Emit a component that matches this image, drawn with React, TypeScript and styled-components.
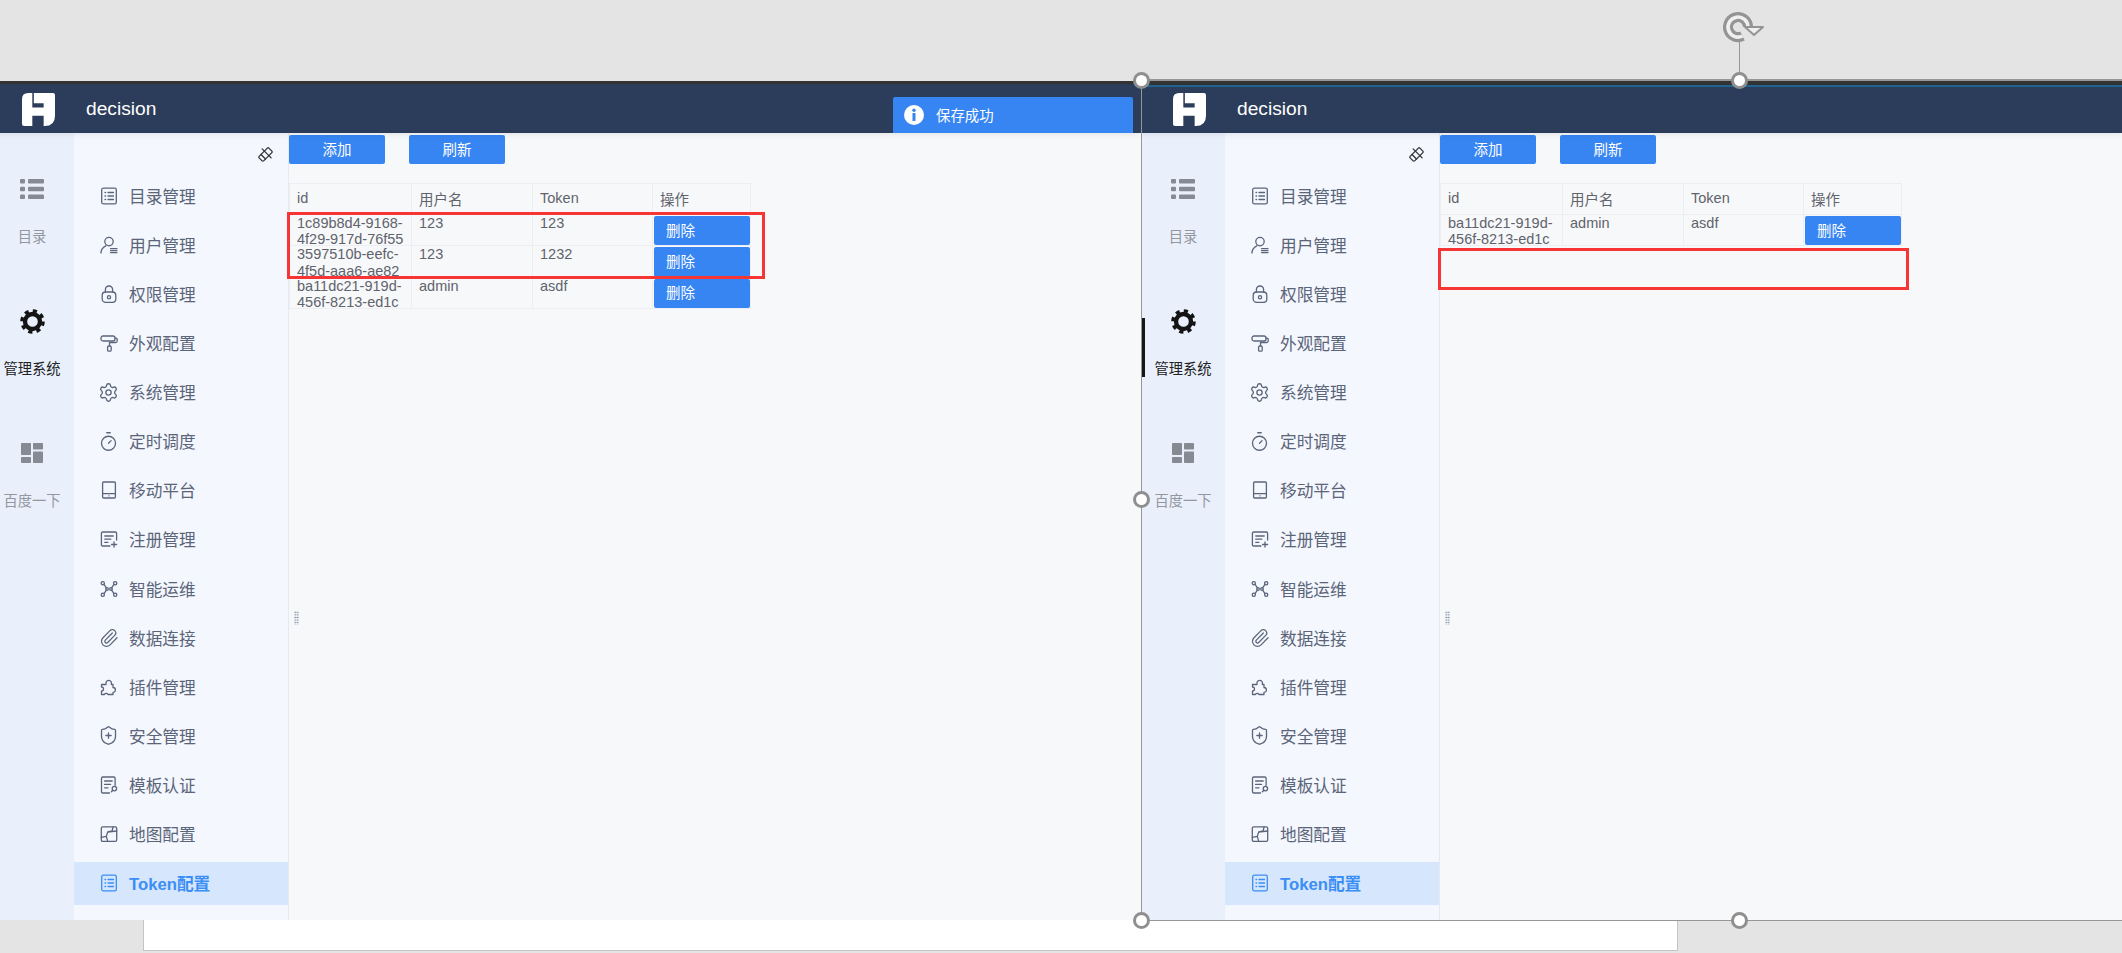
import React from "react";
import styled, { createGlobalStyle } from "styled-components";
import { Settings, Timer, Paperclip, ShieldPlus } from "lucide-react";

const FONT = `"Liberation Sans", "Noto Sans CJK SC", sans-serif`;

const Global = createGlobalStyle`
  html, body { margin: 0; padding: 0; background: #e4e4e4; }
  body { font-family: ${FONT}; }
`;

const Page = styled.div`
  position: relative;
  width: 2122px;
  height: 953px;
  overflow: hidden;
  background: #e4e4e4;
`;
const TopGap = styled.div`
  height: 81px;
`;
const Stage = styled.div`
  display: flex;
  height: 839px;
`;
const Screen = styled.section<{ $width: number; $crop: number }>`
  position: relative;
  flex: 0 0 ${(p) => p.$width}px;
  width: ${(p) => p.$width}px;
  overflow: hidden;
  display: flex;
  flex-direction: column;
  background: #f7f8fa;
  & > * {
    margin-left: ${(p) => -p.$crop}px;
  }
`;
const Header = styled.header<{ $accent: boolean }>`
  position: relative;
  z-index: 2;
  flex: 0 0 52px;
  box-sizing: border-box;
  display: flex;
  align-items: center;
  padding-left: 32px;
  padding-top: ${(p) => (p.$accent ? 0 : 1)}px;
  background: #2c3d5b;
  border-top: ${(p) => (p.$accent ? "4px solid #333" : "3px solid #333")};
  box-shadow: ${(p) =>
    p.$accent ? "inset 0 2px 0 #1f6391, 0 2px 6px rgba(0,0,0,.07)" : "0 2px 6px rgba(0,0,0,.07)"};
`;
const AppName = styled.span`
  margin-left: 31px;
  font-size: 19.2px;
  color: #fff;
`;
const Body = styled.div`
  flex: 1;
  display: flex;
  min-height: 0;
`;
const Rail = styled.nav`
  flex: 0 0 84px;
  box-sizing: border-box;
  padding-top: 44px;
  background: #e9f0fc;
`;
const RailItem = styled.div<{ $active?: boolean }>`
  position: relative;
  height: 132px;
  display: flex;
  flex-direction: column;
  align-items: center;
  color: ${(p) => (p.$active ? "#222" : "#94979c")};
  font-size: 14.3px;
`;
const RailIcon = styled.div`
  height: 24px;
  display: flex;
  align-items: center;
  justify-content: center;
`;
const RailLabel = styled.div`
  margin-top: 25px;
  line-height: 22px;
`;
const RailBar = styled.i`
  position: absolute;
  left: 0;
  top: 9px;
  width: 4px;
  height: 59px;
  background: #161616;
`;
const Menu = styled.nav`
  position: relative;
  flex: 0 0 215px;
  box-sizing: border-box;
  padding-top: 41px;
  display: flex;
  flex-direction: column;
  gap: 6.14px;
  background: #f4f7fe;
  border-right: 1px solid #e6e9f1;
`;
const PinButton = styled.div`
  position: absolute;
  top: 13px;
  right: 14px;
  width: 17px;
  height: 17px;
`;
const MenuItem = styled.div<{ $active?: boolean }>`
  flex: 0 0 43px;
  display: flex;
  align-items: center;
  padding-left: 25px;
  color: ${(p) => (p.$active ? "#3a8ef6" : "#5b6579")};
  background: ${(p) => (p.$active ? "#d6e6fc" : "transparent")};
  font-size: 16.7px;
  font-weight: ${(p) => (p.$active ? 700 : 400)};
`;
const MenuIcon = styled.span`
  flex: 0 0 19px;
  width: 19px;
  height: 19px;
  margin-right: 11px;
  display: flex;
  align-items: center;
  justify-content: center;
  & svg {
    display: block;
    flex: none;
  }
`;
const Content = styled.main`
  position: relative;
  flex: 1;
  min-width: 0;
  padding-top: 2px;
  background: #f7f8fa;
`;
const Toolbar = styled.div`
  display: flex;
  gap: 24px;
  margin-bottom: 19px;
`;
const ToolButton = styled.button`
  width: 96px;
  height: 29px;
  padding: 0 0 2px;
  border: 0;
  border-radius: 2px;
  background: #3685f2;
  color: #fff;
  font: 14.5px ${FONT};
`;
const Table = styled.table`
  table-layout: fixed;
  width: 461px;
  border-collapse: collapse;
  color: #5f636c;
  font-size: 14.5px;
`;
const Th = styled.th<{ $w: number }>`
  width: ${(p) => p.$w}px;
  height: 31px;
  box-sizing: border-box;
  padding: 0 7px 2px;
  border: 1px solid #eceef2;
  font-weight: 400;
  text-align: left;
`;
const Td = styled.td`
  height: 31.3px;
  box-sizing: border-box;
  padding: 0;
  border: 1px solid #eceef2;
  vertical-align: top;
`;
const CellText = styled.div`
  height: 30.3px;
  padding: 0 1px 0 7px;
  line-height: 16.4px;
  overflow-wrap: anywhere;
`;
const DeleteButton = styled.button`
  display: block;
  width: 96px;
  height: 29.3px;
  margin: 1px 0 0 1px;
  padding: 0 0 3px 12px;
  border: 0;
  border-radius: 2px;
  background: #3685f2;
  color: #fff;
  text-align: left;
  font: 14.5px ${FONT};
`;
const Grip = styled.div`
  position: absolute;
  left: 5px;
  top: 478px;
  width: 5px;
  height: 14px;
  background-image: radial-gradient(circle, #8b96aa 0.8px, transparent 0.9px);
  background-size: 2.5px 2.6px;
`;
const Sheet = styled.div`
  box-sizing: border-box;
  width: 1535px;
  height: 31px;
  margin-left: 143px;
  background: #fff;
  border: 1px solid #c4c4c4;
  border-top: 0;
`;
const Toast = styled.div`
  position: absolute;
  z-index: 3;
  left: 893px;
  top: 97px;
  width: 240px;
  height: 36px;
  box-sizing: border-box;
  display: flex;
  align-items: center;
  gap: 12px;
  padding-left: 11px;
  background: #3685f2;
  border-radius: 2px 2px 0 0;
  color: #fff;
  font-size: 14.4px;
`;
const ToastText = styled.span`
  position: relative;
  top: -1px;
`;
const RedFrame = styled.div<{ $x: number; $y: number; $w: number; $h: number }>`
  position: absolute;
  z-index: 4;
  left: ${(p) => p.$x}px;
  top: ${(p) => p.$y}px;
  width: ${(p) => p.$w}px;
  height: ${(p) => p.$h}px;
  box-sizing: border-box;
  border: 3px solid #f73535;
`;
const GuideLine = styled.div<{ $x: number; $y: number; $w: number; $h: number }>`
  position: absolute;
  z-index: 5;
  left: ${(p) => p.$x}px;
  top: ${(p) => p.$y}px;
  width: ${(p) => p.$w}px;
  height: ${(p) => p.$h}px;
  background: #979797;
`;
const Handle = styled.div<{ $x: number; $y: number }>`
  position: absolute;
  z-index: 6;
  left: ${(p) => p.$x - 8.5}px;
  top: ${(p) => p.$y - 8.5}px;
  width: 17px;
  height: 17px;
  box-sizing: border-box;
  border: 3px solid #8f8f8f;
  border-radius: 50%;
  background: #fff;
`;
const RotateGlyph = styled.svg`
  position: absolute;
  z-index: 6;
  left: 1723px;
  top: 11px;
  width: 41px;
  height: 32px;
`;

const Icon: React.FC<{ children: React.ReactNode }> = ({ children }) => (
  <svg width="18" height="18" viewBox="0 0 18 18" fill="none" stroke="currentColor" strokeWidth="1.3" strokeLinecap="round" strokeLinejoin="round">
    {children}
  </svg>
);

const CatalogIcon = () => (
  <Icon>
    <rect x="1.7" y="1.2" width="14.6" height="15.6" rx="1.6" />
    <path d="M5 5.5h.6M5 9h.6M5 12.5h.6M8 5.5h5.5M8 9h5.5M8 12.5h5.5" />
  </Icon>
);
const UserIcon = () => (
  <Icon>
    <circle cx="9" cy="5.6" r="4.2" />
    <path d="M1 17c0-3.6 2-5.8 4.8-7.2M10.5 12.6h6.5M10.5 14.6h6.5M10.5 16.6h6.5" />
  </Icon>
);
const LockIcon = () => (
  <Icon>
    <rect x="2.2" y="7" width="13.6" height="10.4" rx="3.4" />
    <path d="M5.4 7V4.6a3.6 3.6 0 0 1 7.2 0V7" />
    <circle cx="9" cy="12.2" r="1.6" />
  </Icon>
);
const RollerIcon = () => (
  <Icon>
    <rect x="1" y="2" width="14" height="5" rx="2" />
    <path d="M15 4.2h1a1.2 1.2 0 0 1 1.2 1.2v1.6a1.5 1.5 0 0 1-1.5 1.5H9.5v3" />
    <rect x="7.6" y="12" width="3.6" height="5.2" rx="1.2" />
  </Icon>
);
const TabletIcon = () => (
  <Icon>
    <rect x="2.6" y="1" width="12.8" height="16" rx="1" />
    <path d="M2.6 12.6h12.8M8.9 14.8h.2" />
  </Icon>
);
const RegisterIcon = () => (
  <Icon>
    <path d="M10 16H2.6A1.2 1.2 0 0 1 1.4 14.8V3.2A1.2 1.2 0 0 1 2.6 2h12.8a1.2 1.2 0 0 1 1.2 1.2V10" />
    <path d="M4.8 6h8.4M4.8 9.2h6M4.8 12.4h3M14 12v5M11.6 14.5h5" />
  </Icon>
);
const OpsIcon = () => (
  <Icon>
    <circle cx="2.8" cy="3.2" r="1.6" />
    <circle cx="15.2" cy="3.2" r="1.6" />
    <circle cx="2.8" cy="14.8" r="1.6" />
    <circle cx="15.2" cy="14.8" r="1.6" />
    <circle cx="7" cy="9" r="1.3" />
    <circle cx="11" cy="9" r="1.3" />
    <path d="M4 4.4l2.4 3.4M14 4.4l-2.4 3.4M4 13.6l2.4-3.4M14 13.6l-2.4-3.4" />
  </Icon>
);
const PuzzleIcon = () => (
  <Icon>
    <path d="M1.5 9V6.5H6V5a2.7 2.7 0 1 1 5.4 0v1.5H13v3a2.4 2.4 0 1 1 0 4.8v2.2H8a2 2 0 0 0-3.6 0H1.5V13a2 2 0 1 0 0-4Z" />
  </Icon>
);
const CertIcon = () => (
  <Icon>
    <path d="M9.5 17H2.8a1.3 1.3 0 0 1-1.3-1.3V2.3A1.3 1.3 0 0 1 2.8 1h11a1.3 1.3 0 0 1 1.3 1.3v7" />
    <path d="M4.6 5h7.6M4.6 8.4h6M4.6 11.8h3.4" />
    <circle cx="14.4" cy="12.6" r="2.2" />
    <path d="M12.8 14.2l-1.4 1.6" />
  </Icon>
);
const MapIcon = () => (
  <Icon>
    <rect x="1.3" y="1.8" width="15.4" height="14.6" rx="1.4" />
    <path d="M1.3 12.4l5-1 1.4 5M6.3 11.4l1.4-4.4 4.4-1 1-4.2M7.7 7l9-1" />
  </Icon>
);

const menu: { label: string; icon: React.ReactNode; active?: boolean }[] = [
  { label: "目录管理", icon: <CatalogIcon /> },
  { label: "用户管理", icon: <UserIcon /> },
  { label: "权限管理", icon: <LockIcon /> },
  { label: "外观配置", icon: <RollerIcon /> },
  { label: "系统管理", icon: <Settings size={21} strokeWidth={1.5} /> },
  { label: "定时调度", icon: <Timer size={21} strokeWidth={1.5} /> },
  { label: "移动平台", icon: <TabletIcon /> },
  { label: "注册管理", icon: <RegisterIcon /> },
  { label: "智能运维", icon: <OpsIcon /> },
  { label: "数据连接", icon: <Paperclip size={20} strokeWidth={1.5} /> },
  { label: "插件管理", icon: <PuzzleIcon /> },
  { label: "安全管理", icon: <ShieldPlus size={21} strokeWidth={1.5} /> },
  { label: "模板认证", icon: <CertIcon /> },
  { label: "地图配置", icon: <MapIcon /> },
  { label: "Token配置", icon: <CatalogIcon />, active: true },
];

const Logo = () => (
  <svg width="33" height="33" viewBox="0 0 32 32" fill="#fff">
    <path
      fillRule="evenodd"
      d="M6 0H30a2 2 0 0 1 2 2V22Q32 32 22 32H21V22H10V32H2a2 2 0 0 1-2-2V6Q0 0 6 0ZM10 0V14H21V10H11.5V0Z"
    />
  </svg>
);
const ListGlyph = () => (
  <svg width="24" height="20" viewBox="0 0 24 20" fill="#868a93">
    <rect x="0" y="0" width="5" height="4.5" rx="1" />
    <rect x="8" y="0" width="16" height="4.5" rx="1" />
    <rect x="0" y="7.7" width="5" height="4.5" rx="1" />
    <rect x="8" y="7.7" width="16" height="4.5" rx="1" />
    <rect x="0" y="15.4" width="5" height="4.5" rx="1" />
    <rect x="8" y="15.4" width="16" height="4.5" rx="1" />
  </svg>
);
const GearGlyph = () => (
  <svg width="25" height="25" viewBox="0 0 24 24" fill="none" stroke="#141414">
    <circle cx="12" cy="12" r="7.2" strokeWidth="4.2" />
    <circle cx="12" cy="12" r="10.2" strokeWidth="3.2" strokeDasharray="4 4.01" />
  </svg>
);
const GridGlyph = () => (
  <svg width="22" height="20" viewBox="0 0 22 20" fill="#868a93">
    <rect x="0" y="0" width="10" height="12" rx="0.8" />
    <rect x="12" y="0" width="10" height="6.5" rx="0.8" />
    <rect x="0" y="14" width="10" height="6" rx="0.8" />
    <rect x="12" y="8.5" width="10" height="11.5" rx="0.8" />
  </svg>
);
const PinGlyph = () => (
  <svg width="17" height="17" viewBox="0 0 16 16" fill="none" stroke="#333" strokeWidth="1.2" strokeLinejoin="round" strokeLinecap="round">
    <g transform="rotate(-45 8 8)">
      <rect x="1.5" y="5" width="13" height="6" rx="1" />
      <path d="M5 5v6M9.5 2v12" />
    </g>
  </svg>
);
const InfoGlyph = () => (
  <svg width="20" height="20" viewBox="0 0 20 20">
    <circle cx="10" cy="10" r="10" fill="#fff" />
    <circle cx="10" cy="5.2" r="1.7" fill="#3685f2" />
    <rect x="8.5" y="8" width="3" height="8" rx="0.6" fill="#3685f2" />
  </svg>
);

type Row = { id: string; user: string; token: string };

const Panel: React.FC<{ width: number; crop: number; accent: boolean; rows: Row[] }> = ({ width, crop, accent, rows }) => (
  <Screen $width={width} $crop={crop}>
    <Header $accent={accent}>
      <Logo />
      <AppName>decision</AppName>
    </Header>
    <Body>
      <Rail>
        <RailItem>
          <RailIcon><ListGlyph /></RailIcon>
          <RailLabel>目录</RailLabel>
        </RailItem>
        <RailItem $active>
          <RailBar />
          <RailIcon><GearGlyph /></RailIcon>
          <RailLabel>管理系统</RailLabel>
        </RailItem>
        <RailItem>
          <RailIcon><GridGlyph /></RailIcon>
          <RailLabel>百度一下</RailLabel>
        </RailItem>
      </Rail>
      <Menu>
        <PinButton><PinGlyph /></PinButton>
        {menu.map((m) => (
          <MenuItem key={m.label} $active={m.active}>
            <MenuIcon>{m.icon}</MenuIcon>
            {m.label}
          </MenuItem>
        ))}
      </Menu>
      <Content>
        <Toolbar>
          <ToolButton>添加</ToolButton>
          <ToolButton>刷新</ToolButton>
        </Toolbar>
        <Table>
          <thead>
            <tr>
              <Th $w={122}>id</Th>
              <Th $w={121}>用户名</Th>
              <Th $w={120}>Token</Th>
              <Th $w={98}>操作</Th>
            </tr>
          </thead>
          <tbody>
            {rows.map((r) => (
              <tr key={r.id}>
                <Td><CellText>{r.id}</CellText></Td>
                <Td><CellText>{r.user}</CellText></Td>
                <Td><CellText>{r.token}</CellText></Td>
                <Td><DeleteButton>删除</DeleteButton></Td>
              </tr>
            ))}
          </tbody>
        </Table>
        <Grip />
      </Content>
    </Body>
  </Screen>
);

const admin: Row = { id: "ba11dc21-919d-456f-8213-ed1c", user: "admin", token: "asdf" };

export default function App() {
  return (
    <Page>
      <Global />
      <TopGap />
      <Stage>
        <Panel
          width={1141}
          crop={10}
          accent={false}
          rows={[
            { id: "1c89b8d4-9168-4f29-917d-76f55", user: "123", token: "123" },
            { id: "3597510b-eefc-4f5d-aaa6-ae82", user: "123", token: "1232" },
            admin,
          ]}
        />
        <Panel width={981} crop={0} accent rows={[admin]} />
      </Stage>
      <Sheet />
      <Toast>
        <InfoGlyph />
        <ToastText>保存成功</ToastText>
      </Toast>
      <RedFrame $x={287} $y={212} $w={478} $h={67} />
      <RedFrame $x={1438} $y={248} $w={471} $h={42} />
      <GuideLine $x={1141} $y={79} $w={981} $h={2} />
      <GuideLine $x={1141} $y={80} $w={1} $h={840} />
      <GuideLine $x={1141} $y={920} $w={981} $h={1} />
      <GuideLine $x={1739} $y={42} $w={1} $h={38} />
      <Handle $x={1141} $y={80} />
      <Handle $x={1739} $y={80} />
      <Handle $x={1141} $y={499} />
      <Handle $x={1141} $y={920} />
      <Handle $x={1739} $y={920} />
      <RotateGlyph viewBox="0 0 41 32" fill="none">
        <path d="M19.5 25A10 10 0 1 1 25 16" stroke="#949494" strokeWidth="10" />
        <path d="M19.5 25A10 10 0 1 1 25 16" stroke="#efefef" strokeWidth="3.6" />
        <path d="M22 16h18l-9 8z" fill="#efefef" stroke="#949494" strokeWidth="2" strokeLinejoin="round" />
      </RotateGlyph>
    </Page>
  );
}
